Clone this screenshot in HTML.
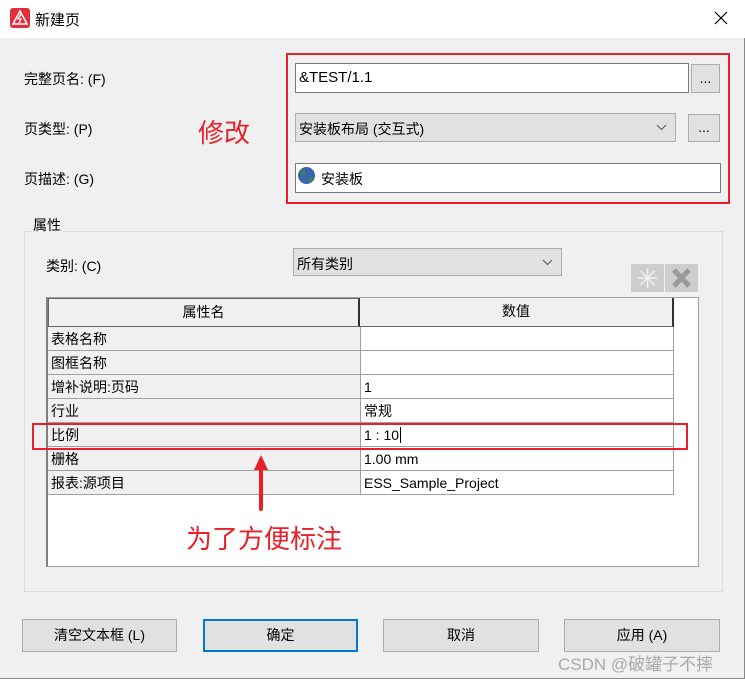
<!DOCTYPE html>
<html><head><meta charset="utf-8"><style>
*{box-sizing:border-box;margin:0;padding:0}
body{width:745px;height:679px;background:#f0f0f0;font-family:"Liberation Sans","Noto Sans CJK SC",sans-serif;font-size:14px;color:#000;position:relative;overflow:hidden;border-right:1px solid #888;border-bottom:1px solid #888}
.a{position:absolute}
.t{white-space:nowrap}
.inp{background:#fff;border:1px solid #7a7a7a}
.btn{background:#e1e1e1;border:1px solid #adadad;text-align:center}
.cell{position:absolute;height:24px;border-right:1px solid #a0a0a0;border-bottom:1px solid #a0a0a0;padding-left:3px;line-height:24px}
.chev{position:absolute;right:8px;top:10px}
</style></head><body>
<div class="a" style="left:0;top:0;width:745px;height:38px;background:#fff"></div>
<div class="a" style="left:10px;top:8px;width:20px;height:20px;background:#e32d3b;border-radius:3px"><svg width="20" height="20"><path d="M10 3 L17 16 L3 16 Z" fill="none" stroke="#fff" stroke-width="1.5"/><path d="M11 6 L8 11 L11 11 L9 15" fill="none" stroke="#fff" stroke-width="1.3"/></svg></div>
<div class="a t" style="left:35px;top:9px;font-size:15px">新建页</div>
<svg class="a" style="left:714px;top:11px" width="14" height="14"><path d="M1 1L13 13M13 1L1 13" stroke="#000" stroke-width="1.2"/></svg>

<div class="a t" style="left:24px;top:69px">完整页名: (F)</div>
<div class="a t" style="left:24px;top:119px">页类型: (P)</div>
<div class="a t" style="left:24px;top:169px">页描述: (G)</div>
<div class="a t" style="left:198px;top:113px;font-size:26px;color:#e8202a">修改</div>

<div class="a" style="left:286px;top:53px;width:444px;height:151px;border:2px solid #e8202a"></div>
<div class="a inp t" style="left:295px;top:63px;width:394px;height:30px;padding:5px 3px;font-size:15px">&amp;TEST/1.1</div>
<div class="a btn" style="left:691px;top:64px;width:29px;height:29px;line-height:26px">...</div>
<div class="a t" style="left:295px;top:113px;width:381px;height:29px;background:#e1e1e1;border:1px solid #adadad;padding:5px 3px">安装板布局 (交互式)<svg class="chev" width="11" height="7"><path d="M1 1L5.5 5.5L10 1" fill="none" stroke="#555"/></svg></div>
<div class="a btn" style="left:688px;top:114px;width:32px;height:28px;line-height:25px">...</div>
<div class="a inp t" style="left:295px;top:163px;width:426px;height:30px;padding:5px 0 0 25px">安装板</div>
<svg class="a" style="left:297px;top:166px" width="19" height="19"><circle cx="9.5" cy="9.5" r="8.5" fill="#3a64b0"/><path d="M4 5 Q8 3 9 7 Q7 10 4 9Z M11 12 Q15 10 16 13 Q13 17 11 15Z" fill="#3a8a4a"/></svg>

<div class="a" style="left:24px;top:231px;width:699px;height:361px;border:1px solid #dcdcdc"></div>
<div class="a t" style="left:31px;top:215px;background:#f0f0f0;padding:0 2px">属性</div>
<div class="a t" style="left:46px;top:256px">类别: (C)</div>
<div class="a t" style="left:293px;top:248px;width:269px;height:28px;background:#e1e1e1;border:1px solid #adadad;padding:5px 3px">所有类别<svg class="chev" width="11" height="7"><path d="M1 1L5.5 5.5L10 1" fill="none" stroke="#555"/></svg></div>
<div class="a" style="left:631px;top:264px;width:33px;height:28px;background:#cdcdcd"><svg width="33" height="28"><path d="M16.5 4V24M7 14H26M9.5 7L23.5 21M23.5 7L9.5 21" stroke="#f2f2f2" stroke-width="1.5"/></svg></div>
<div class="a" style="left:665px;top:264px;width:33px;height:28px;background:#cdcdcd"><svg width="33" height="28"><path d="M9 6L24 22M24 6L9 22" stroke="#9a9a9a" stroke-width="5"/></svg></div>

<div class="a" style="left:46px;top:297px;width:653px;height:270px;background:#fff;border:1px solid #a0a0a0;border-left:2px solid #808080"></div>
<div class="a" style="left:48px;top:298px;width:312px;height:29px;background:#f0f0f0;border:1px solid #666;border-right:2px solid #333;text-align:center;line-height:27px">属性名</div>
<div class="a" style="left:360px;top:298px;width:314px;height:29px;background:#f0f0f0;border-bottom:1px solid #666;border-right:2px solid #333;text-align:center;line-height:27px">数值</div>
<div class="cell" style="left:48px;top:327px;width:313px;background:#f0f0f0">表格名称</div><div class="cell" style="left:361px;top:327px;width:313px"></div>
<div class="cell" style="left:48px;top:351px;width:313px;background:#f0f0f0">图框名称</div><div class="cell" style="left:361px;top:351px;width:313px"></div>
<div class="cell" style="left:48px;top:375px;width:313px;background:#f0f0f0">增补说明:页码</div><div class="cell" style="left:361px;top:375px;width:313px">1</div>
<div class="cell" style="left:48px;top:399px;width:313px;background:#f0f0f0">行业</div><div class="cell" style="left:361px;top:399px;width:313px">常规</div>
<div class="cell" style="left:48px;top:423px;width:313px;background:#f0f0f0">比例</div><div class="cell" style="left:361px;top:423px;width:313px">1 : 10<span style="border-left:1px solid #000;margin-left:1px"></span></div>
<div class="cell" style="left:48px;top:447px;width:313px;background:#f0f0f0">栅格</div><div class="cell" style="left:361px;top:447px;width:313px">1.00 mm</div>
<div class="cell" style="left:48px;top:471px;width:313px;background:#f0f0f0">报表:源项目</div><div class="cell" style="left:361px;top:471px;width:313px">ESS_Sample_Project</div>
<div class="a" style="left:32px;top:423px;width:656px;height:27px;border:2px solid #e8202a"></div>
<svg class="a" style="left:250px;top:452px" width="24" height="60"><path d="M11 8V57" stroke="#e8202a" stroke-width="4" stroke-linecap="round"/><path d="M11 3L4 18H18Z" fill="#e8202a"/></svg>
<div class="a t" style="left:186px;top:519px;font-size:26px;color:#e8202a">为了方便标注</div>

<div class="a btn t" style="left:22px;top:619px;width:155px;height:33px;line-height:31px">清空文本框 (L)</div>
<div class="a btn t" style="left:203px;top:619px;width:155px;height:33px;line-height:29px;border:2px solid #0078d7">确定</div>
<div class="a btn t" style="left:383px;top:619px;width:156px;height:33px;line-height:31px">取消</div>
<div class="a btn t" style="left:564px;top:619px;width:156px;height:33px;line-height:31px">应用 (A)</div>
<div class="a t" style="left:558px;top:650px;font-size:17px;color:#aaa">CSDN @破罐子不摔</div>
</body></html>
